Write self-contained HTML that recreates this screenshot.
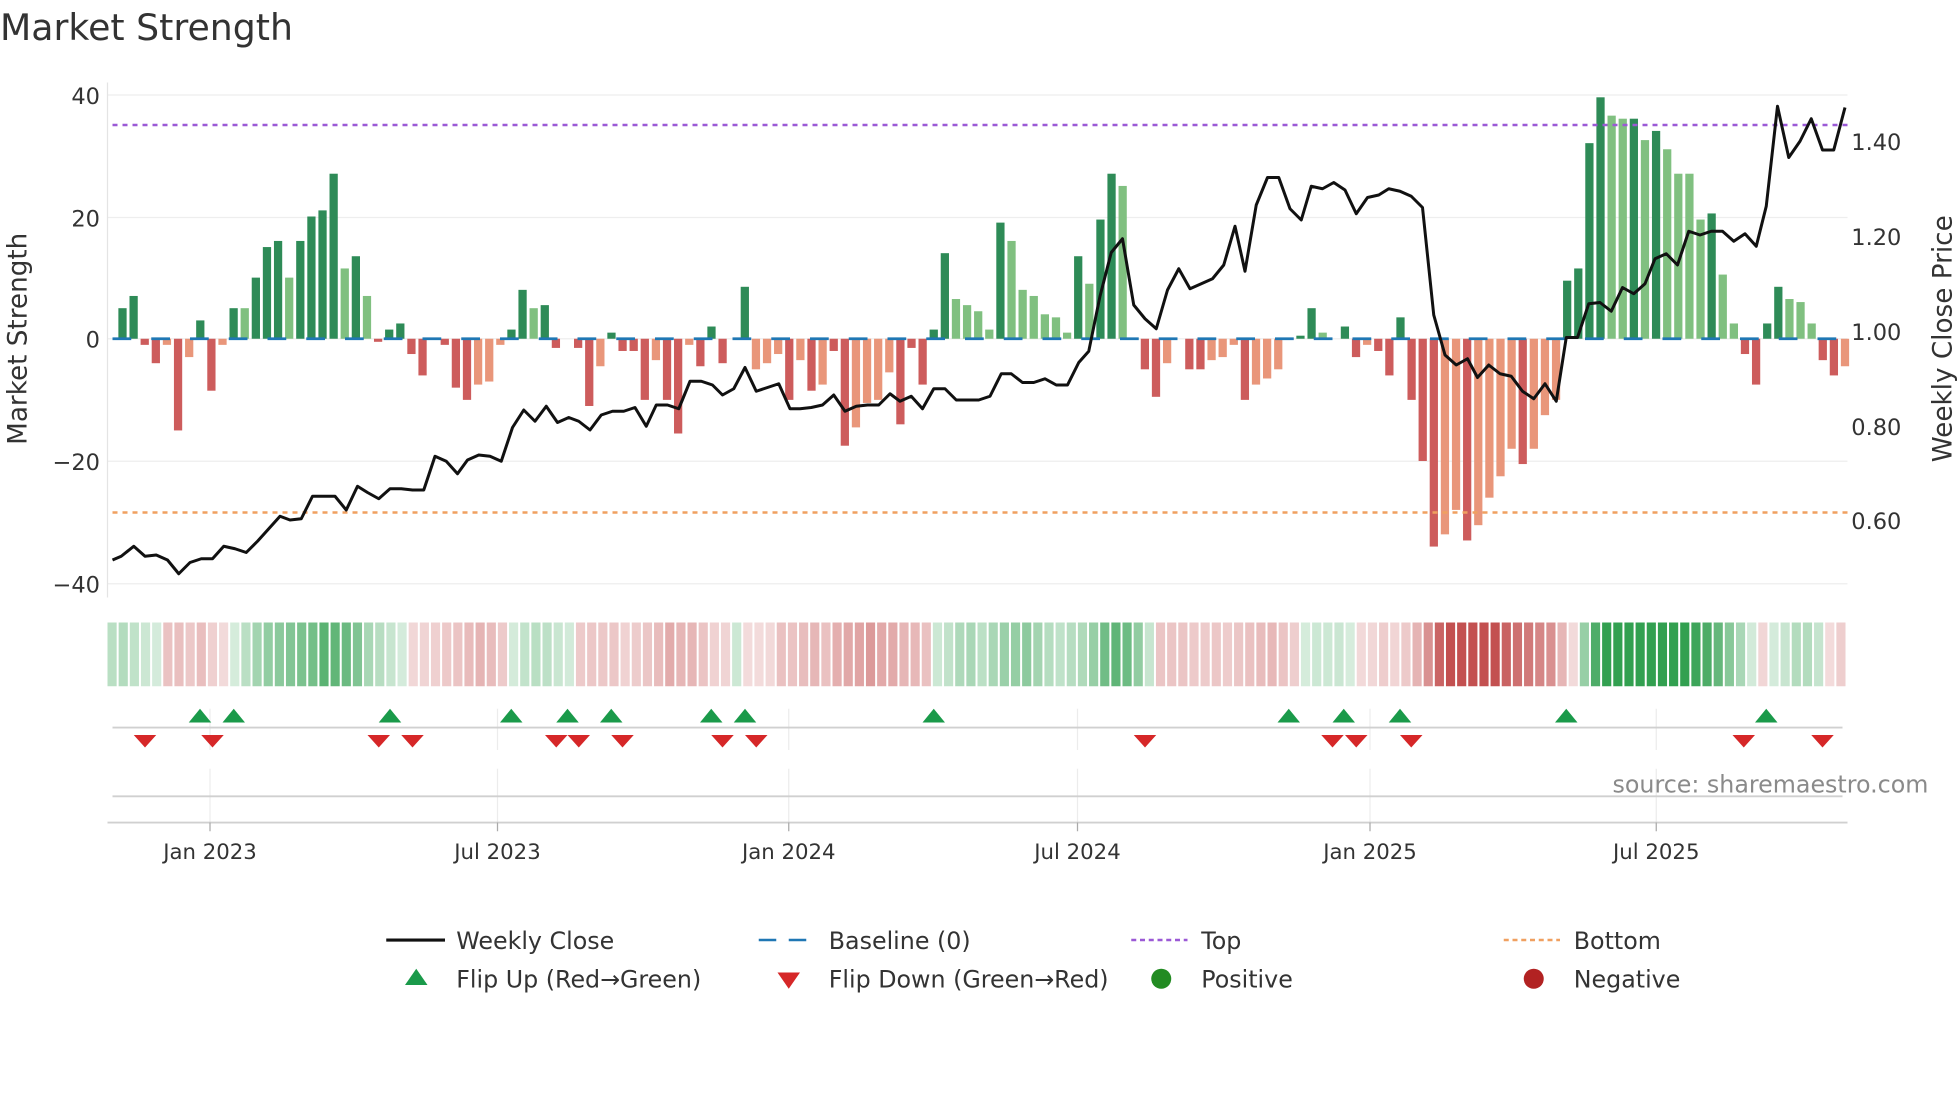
<!DOCTYPE html>
<html><head><meta charset="utf-8"><style>
html,body{margin:0;padding:0;background:#fff;}
svg{display:block;font-family:"DejaVu Sans","Liberation Sans",sans-serif;}
</style></head><body>
<svg id="s" width="1960" height="1102" viewBox="0 0 1568 881.6" xmlns="http://www.w3.org/2000/svg">
<text x="0" y="32" font-size="29" fill="#333">Market Strength</text>
<g stroke="#eeeeee" stroke-width="1">
<line x1="86" x2="1478" y1="76" y2="76"/><line x1="86" x2="1478" y1="174" y2="174"/>
<line x1="86" x2="1478" y1="271" y2="271"/><line x1="86" x2="1478" y1="369" y2="369"/>
<line x1="86" x2="1478" y1="467" y2="467"/>
</g>
<line x1="86" x2="86" y1="66" y2="478" stroke="#e4e4e4"/>
<g font-size="18" fill="#333" text-anchor="end">
<text x="80" y="83">40</text><text x="80" y="181">20</text><text x="80" y="278">0</text>
<text x="80" y="376">−20</text><text x="80" y="474">−40</text>
</g>
<g font-size="18" fill="#333">
<text x="1481" y="120">1.40</text><text x="1481" y="196">1.20</text><text x="1481" y="272">1.00</text>
<text x="1481" y="348">0.80</text><text x="1481" y="423">0.60</text>
</g>
<text transform="translate(21,271) rotate(-90)" font-size="21" fill="#333" text-anchor="middle">Market Strength</text>
<text transform="translate(1561,271) rotate(-90)" font-size="21" fill="#333" text-anchor="middle">Weekly Close Price</text>
<g id="bars"></g>
<line x1="90" x2="1478" y1="271" y2="271" stroke="#1f77b4" stroke-width="2.2" stroke-dasharray="15,16"/>
<line x1="90" x2="1478" y1="100" y2="100" stroke="#9b59d6" stroke-width="2" stroke-dasharray="4,4"/>
<line x1="90" x2="1478" y1="410" y2="410" stroke="#f0a060" stroke-width="2" stroke-dasharray="4,4"/>
<polyline id="price" fill="none" stroke="#111" stroke-width="2.4" stroke-linejoin="round"/>
<g id="strip"></g>
<g stroke="#ececec" stroke-width="1">
<line x1="168" x2="168" y1="567" y2="600"/><line x1="398" x2="398" y1="567" y2="600"/><line x1="631" x2="631" y1="567" y2="600"/><line x1="862" x2="862" y1="567" y2="600"/><line x1="1096" x2="1096" y1="567" y2="600"/><line x1="1325" x2="1325" y1="567" y2="600"/>
<line x1="168" x2="168" y1="615" y2="658"/><line x1="398" x2="398" y1="615" y2="658"/><line x1="631" x2="631" y1="615" y2="658"/><line x1="862" x2="862" y1="615" y2="658"/><line x1="1096" x2="1096" y1="615" y2="658"/><line x1="1325" x2="1325" y1="615" y2="658"/>
</g>
<line x1="90" x2="1474" y1="582" y2="582" stroke="#d0d0d0" stroke-width="1.5"/>
<line x1="90" x2="1474" y1="637" y2="637" stroke="#d0d0d0" stroke-width="1.5"/>
<line x1="86" x2="1478" y1="658" y2="658" stroke="#d0d0d0" stroke-width="1.5"/>
<g stroke="#aaa"><line x1="168" x2="168" y1="658" y2="665"/><line x1="398" x2="398" y1="658" y2="665"/><line x1="631" x2="631" y1="658" y2="665"/><line x1="862" x2="862" y1="658" y2="665"/><line x1="1096" x2="1096" y1="658" y2="665"/><line x1="1325" x2="1325" y1="658" y2="665"/></g>
<g id="marks"></g>
<text x="1290" y="634" font-size="19" fill="#8a8a8a">source: sharemaestro.com</text>
<g font-size="17" fill="#333" text-anchor="middle">
<text x="168" y="687">Jan 2023</text><text x="398" y="687">Jul 2023</text><text x="631" y="687">Jan 2024</text>
<text x="862" y="687">Jul 2024</text><text x="1096" y="687">Jan 2025</text><text x="1325" y="687">Jul 2025</text>
</g>
<g font-size="19" fill="#333">
<line x1="309" x2="356" y1="752" y2="752" stroke="#111" stroke-width="2.5"/>
<text x="365" y="759">Weekly Close</text>
<line x1="607" x2="652" y1="752" y2="752" stroke="#1f77b4" stroke-width="2" stroke-dasharray="14,10"/>
<text x="663" y="759">Baseline (0)</text>
<line x1="905" x2="950" y1="752" y2="752" stroke="#9b59d6" stroke-width="2" stroke-dasharray="4,3"/>
<text x="961" y="759">Top</text>
<line x1="1203" x2="1248" y1="752" y2="752" stroke="#f0a060" stroke-width="2" stroke-dasharray="4,3"/>
<text x="1259" y="759">Bottom</text>
<polygon points="324,788 342,788 333,775" fill="#1a9a4a"/>
<text x="365" y="790">Flip Up (Red→Green)</text>
<polygon points="622,778 640,778 631,791" fill="#d62728"/>
<text x="663" y="790">Flip Down (Green→Red)</text>
<circle cx="929" cy="783" r="8" fill="#228b22"/>
<text x="961" y="790">Positive</text>
<circle cx="1227" cy="783" r="8" fill="#b22222"/>
<text x="1259" y="790">Negative</text>
</g>
</svg>
<script>
var NS="http://www.w3.org/2000/svg";
var V=[[5,0],[7,0],[-1,0],[-4,0],[-1,1],[-15,0],[-3,1],[3,0],[-8.5,0],[-1,1],[5,0],[5,1],[10,0],[15,0],[16,0],[10,1],[16,0],[20,0],[21,0],[27,0],[11.5,1],[13.5,0],[7,1],[-0.5,0],[1.5,0],[2.5,0],[-2.5,0],[-6,0],[0,0],[-1,0],[-8,0],[-10,0],[-7.5,1],[-7,1],[-1,1],[1.5,0],[8,0],[5,1],[5.5,0],[-1.5,0],[0,0],[-1.5,0],[-11,0],[-4.5,1],[1,0],[-2,0],[-2,0],[-10,0],[-3.5,1],[-10,0],[-15.5,0],[-1,1],[-4.5,0],[2,0],[-4,0],[0,0],[8.5,0],[-5,1],[-4,1],[-2.5,1],[-10,0],[-3.5,1],[-8.5,0],[-7.5,1],[-2,0],[-17.5,0],[-14.5,1],[-10.5,1],[-10,1],[-5.5,1],[-14,0],[-1.5,0],[-7.5,0],[1.5,0],[14,0],[6.5,1],[5.5,1],[4.5,1],[1.5,1],[19,0],[16,1],[8,1],[7,1],[4,1],[3.5,1],[1,1],[13.5,0],[9,1],[19.5,0],[27,0],[25,1],[0,0],[-5,0],[-9.5,0],[-4,1],[0,0],[-5,0],[-5,0],[-3.5,1],[-3,1],[-1,1],[-10,0],[-7.5,1],[-6.5,1],[-5,1],[0,0],[0.5,0],[5,0],[1,1],[0,0],[2,0],[-3,0],[-1,1],[-2,0],[-6,0],[3.5,0],[-10,0],[-20,0],[-34,0],[-32,1],[-28,1],[-33,0],[-30.5,1],[-26,1],[-22.5,1],[-18,1],[-20.5,0],[-18,1],[-12.5,1],[-10,1],[9.5,0],[11.5,0],[32,0],[39.5,0],[36.5,1],[36,1],[36,0],[32.5,1],[34,0],[31,1],[27,1],[27,1],[19.5,1],[20.5,0],[10.5,1],[2.5,1],[-2.5,0],[-7.5,0],[2.5,0],[8.5,0],[6.5,1],[6,1],[2.5,1],[-3.5,0],[-6,0],[-4.5,1]];
var n=V.length,x0=98,x1=1476,dx=(x1-x0)/(n-1);
var bars=document.getElementById("bars"),strip=document.getElementById("strip");
function r(p,a){var e=document.createElementNS(NS,p);for(var k in a)e.setAttribute(k,a[k]);return e;}
var sw=(1478-86)/n;
for(var i=0;i<n;i++){
 var v=V[i][0],t=V[i][1],x=x0+i*dx,h=Math.abs(v)*4.89;
 var c=v>=0?(t?"#80c080":"#2e8b57"):(t?"#e9967a":"#cd5c5c");
 if(h>0.3)bars.appendChild(r("rect",{x:x-3.3,y:v>=0?271-h:271,width:6.6,height:h,fill:c}));
 var s=0,m=0;for(var j=Math.max(0,i-3);j<=i;j++){s+=V[j][0];m++;}
 var a=s/m,al=Math.min(1,Math.abs(a)/28)*0.8+0.2;
 var col=a>=0?"rgba(50,160,80,"+al+")":"rgba(195,80,80,"+al+")";
 strip.appendChild(r("rect",{x:86+i*sw,y:498,width:sw-1.6,height:51,fill:col}));
}
var P=[[90,448],[97,445],[107,437],[116,445],[125,444],[134,448],[143,459],[152,450],[161,447],[170,447],[179,437],[188,439],[197,442],[206,433],[215,423],[224,413],[232,416],[241,415],[250,397],[259,397],[268,397],[277,408],[286,389],[294,394],[303,399],[312,391],[321,391],[330,392],[339,392],[348,365],[357,369],[366,379],[374,368],[383,364],[392,365],[401,369],[410,342],[419,328],[428,337],[437,325],[446,338],[455,334],[463,337],[472,344],[481,332],[490,329],[499,329],[508,326],[517,341],[525,324],[534,324],[543,327],[552,305],[561,305],[570,308],[578,316],[587,311],[596,294],[605,313],[614,310],[623,307],[632,327],[640,327],[649,326],[658,324],[667,316],[676,329],[685,325],[694,324],[703,324],[712,315],[720,321],[729,317],[738,327],[747,311],[756,311],[765,320],[774,320],[783,320],[792,317],[801,299],[809,299],[818,306],[827,306],[836,303],[845,308],[854,308],[863,290],[871,281],[880,237],[889,202],[898,191],[907,244],[916,255],[925,263],[934,232],[943,215],[952,231],[961,227],[970,223],[979,212],[988,181],[996,217],[1005,164],[1014,142],[1023,142],[1032,167],[1041,176],[1049,149],[1058,151],[1067,146],[1076,152],[1085,171],[1094,158],[1103,156],[1111,151],[1120,153],[1129,157],[1138,166],[1147,252],[1156,284],[1165,292],[1174,287],[1182,302],[1191,292],[1200,299],[1209,301],[1218,313],[1227,319],[1236,307],[1245,321],[1253,270],[1262,270],[1271,243],[1280,242],[1289,249],[1298,230],[1307,235],[1316,227],[1324,207],[1333,203],[1342,212],[1351,185],[1360,188],[1369,185],[1378,185],[1387,193],[1396,187],[1405,197],[1413,165],[1422,85],[1431,126],[1440,113],[1449,95],[1458,120],[1467,120],[1476,86]];
document.getElementById("price").setAttribute("points",P.map(function(p){return p.join(",")}).join(" "));
var marks=document.getElementById("marks");
[160,187,312,409,454,489,569,596,747,1031,1075,1120,1253,1413].forEach(function(x){
 marks.appendChild(r("polygon",{points:(x-9)+",578 "+(x+9)+",578 "+x+",567",fill:"#1a9a4a"}));});
[116,170,303,330,445,463,498,578,605,916,1066,1085,1129,1395,1458].forEach(function(x){
 marks.appendChild(r("polygon",{points:(x-9)+",588 "+(x+9)+",588 "+x+",598",fill:"#d62728"}));});
</script>
</body></html>
